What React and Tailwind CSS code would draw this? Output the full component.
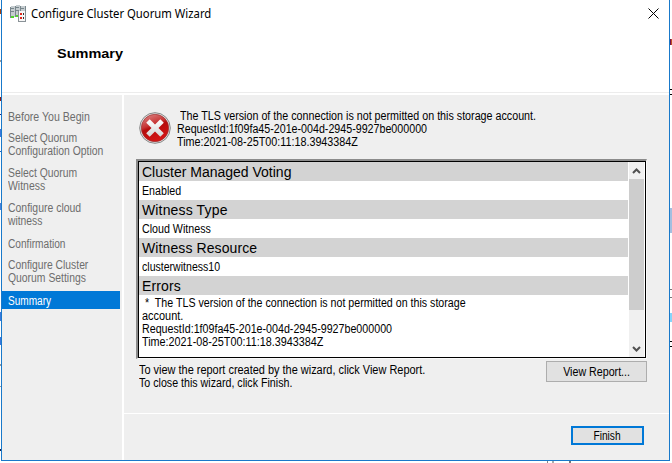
import React from "react";

const steps = [
  { lines: ["Before You Begin"], sx: ["scale-x-[0.882]"] },
  { lines: ["Select Quorum", "Configuration Option"], sx: ["scale-x-[0.863]", "scale-x-[0.866]"] },
  { lines: ["Select Quorum", "Witness"], sx: ["scale-x-[0.863]", "scale-x-[0.87]"] },
  { lines: ["Configure cloud", "witness"], sx: ["scale-x-[0.87]", "scale-x-[0.86]"] },
  { lines: ["Confirmation"], sx: ["scale-x-[0.845]"] },
  { lines: ["Configure Cluster", "Quorum Settings"], sx: ["scale-x-[0.86]", "scale-x-[0.865]"] },
];

function Line({ className = "scale-x-[0.89]", children }) {
  return <div className={"h-[13px] w-max origin-left whitespace-pre leading-[13px] " + className}>{children}</div>;
}

function ClusterIcon() {
  return (
    <svg width="17" height="17" viewBox="0 0 17 17" shapeRendering="crispEdges">
      <path d="M1 1h4v11h-4zM6 0h4v11h-4zM11 1h4v10h-4z" fill="#c5cccf" />
      <path d="M0 2h1v11h-1zM5 1h1v11h-1zM10 1h1v6h-1zM1 3h3v1h-3zM1 6h3v1h-3zM6 2h3v1h-3zM6 5h3v1h-3zM11 3h3v1h-3zM15 1h1v6h-1z" fill="#78868c" />
      <path d="M1 11h3v2h-3zM6 10h2v2h-2z" fill="#51d52c" />
      <path d="M9 6h7v10h-7z" fill="#f7f7f7" />
      <path d="M8 6h1v10h-1zM8 16h8v1h-8zM15 6h1v10h-1z" fill="#8a9297" />
      <path d="M10 8h2v2h-2zM10 12h2v2h-2z" fill="#df271c" />
      <path d="M13 8h1v2h-1zM13 12h1v2h-1z" fill="#333" />
    </svg>
  );
}

function ErrorIcon() {
  return (
    <svg width="32" height="32" viewBox="0 0 32 32">
      <defs>
        <linearGradient id="red" x1="0" y1="0" x2="0.4" y2="1">
          <stop offset="0" stopColor="#e09090" />
          <stop offset="0.45" stopColor="#c73535" />
          <stop offset="0.55" stopColor="#b50d0d" />
          <stop offset="1" stopColor="#d31414" />
        </linearGradient>
        <linearGradient id="cross" x1="0" y1="0" x2="0" y2="1">
          <stop offset="0" stopColor="#ffffff" />
          <stop offset="1" stopColor="#d4d4d4" />
        </linearGradient>
      </defs>
      <circle cx="16" cy="16" r="15.3" fill="#e6e6e6" stroke="#858585" strokeWidth="1" />
      <circle cx="16" cy="16" r="13.7" fill="url(#red)" stroke="#9a3030" strokeWidth="0.7" />
      <path d="M10.700 7.200 16 12.500l5.300-5.300 3.500 3.500L19.500 16l5.300 5.300-3.500 3.500L16 19.500l-5.300 5.300-3.500-3.500L12.500 16l-5.300-5.300z" fill="url(#cross)" />
    </svg>
  );
}

function Heading({ children, className = "" }) {
  return <div className={"h-[19px] w-[489px] whitespace-pre bg-[#d3d3d3] pl-[3px] text-[14px] leading-[20px] " + className}>{children}</div>;
}

function Entry({ children }) {
  return <div className="flex h-[19px] items-end pb-[2px] pl-[3px]">{children}</div>;
}

function LeftEdge() {
  return (
    <div className="flex w-px shrink-0 flex-col pt-[9px]">
      <div className="h-[5px] bg-[#a04010]" />
      <div className="mt-[46px] h-[2px] bg-[#9a9a9a]" />
      <div className="mt-[35px] h-[4px] bg-[#8c1c14]" />
      <div className="mt-[13px] h-px bg-[#202080]" />
      <div className="mt-[14px] h-[8px] bg-[#3a78dc]" />
      <div className="mt-[14px] h-px bg-[#2060c0]" />
      <div className="mt-[51px] h-[7px] bg-[#4a80d8]" />
      <div className="mt-[102px] h-[9px] bg-[#3a78dc]" />
      <div className="mt-[16px] h-[8px] bg-[#3a78dc]" />
      <div className="mt-[19px] h-[2px] bg-[#9a9a9a]" />
      <div className="mt-[20px] h-px bg-[#9a9a9a]" />
      <div className="mt-[62px] h-[2px] bg-[#102050]" />
    </div>
  );
}

function RightEdge() {
  return (
    <div className="flex w-[2px] shrink-0 flex-col pt-[39px]">
      <div className="h-[6px] border-l border-[#701050] bg-[#c05020]" />
      <div className="mt-[44px] h-[6px] border-y border-black" />
      <div className="mt-[113px] h-[25px] bg-[#a3bfe0]" />
      <div className="mt-[56px] h-[9px] border-y border-[#777]" />
      <div className="mt-[15px] h-[9px] bg-[#85d5fb]" />
      <div className="mt-[19px] h-[6px] border-y border-black" />
    </div>
  );
}

export default function App() {
  return (
    <div className="h-[463px] w-[672px] overflow-hidden bg-white font-['Liberation_Sans',Arial,sans-serif] text-[12px] text-black">
      <div className="flex h-[461px]">
        <LeftEdge />
        <div className="flex w-[669px] flex-col border-x border-b border-[#1979ca] bg-white">
          <header className="h-[92px] shrink-0">
            <div className="flex h-[27px] items-center gap-[4px] pr-[10px] pl-[8px]">
              <ClusterIcon />
              <div className="origin-left scale-x-[0.942] font-['Noto_Sans',sans-serif] text-[12px] leading-[16px] whitespace-pre">Configure Cluster Quorum Wizard</div>
              <svg className="ml-auto" width="11" height="11" viewBox="0 0 11 11"><path d="M.5.5l10 10M10.500.5l-10 10" stroke="#000" /></svg>
            </div>
            <div className="flex pt-[19px] pl-[55px]">
              <div className="origin-left scale-x-[1.115] text-[13px] leading-[16px] font-bold">Summary</div>
            </div>
          </header>
          <div className="mb-[2px] h-px shrink-0 bg-[#ececec]" />
          <div className="flex min-h-0 flex-1 gap-[2px]">
            <nav className="w-[120px] shrink-0 bg-[#efefef] pt-[16px] text-[#6d6d6d]">
              <div className="flex flex-col gap-[9px] pl-[6px] *:first:-mb-px *:last:-mt-px">
                {steps.map((s, i) => (
                  <div key={i} className={i === 4 ? "pt-px" : ""}>
                    {s.lines.map((t, j) => <Line key={j} className={s.sx[j]}>{t}</Line>)}
                  </div>
                ))}
              </div>
              <div className="mt-[6px] h-[18px] w-[118px] bg-[#0078d7] pt-[4px] pl-[6px] text-white"><Line className="scale-x-[0.84]">Summary</Line></div>
            </nav>
            <main className="flex min-w-0 flex-1 flex-col bg-[#efefef]">
              <div className="flex h-[64px] shrink-0 gap-[6px] pt-[15px] pl-[15px]">
                <div className="pt-[2px]"><ErrorIcon /></div>
                <div>
                  <div className="pl-[3px]"><Line className="scale-x-[0.893]">The TLS version of the connection is not permitted on this storage account.</Line></div>
                  <Line>RequestId:1f09fa45-201e-004d-2945-9927be000000</Line>
                  <Line className="scale-x-[0.898]">Time:2021-08-25T00:11:18.3943384Z</Line>
                </div>
              </div>
              <div className="ml-[12px] h-[200px] w-[511px] shrink-0 border-t-2 border-r border-b border-l-2 border-t-[#8b8b8b] border-r-[#fafafa] border-b-[#fafafa] border-l-[#8b8b8b]">
                <div className="flex h-full border border-black bg-white">
                  <div className="w-[490px]">
                    <Heading>Cluster Managed Voting</Heading>
                    <Entry><Line>Enabled</Line></Entry>
                    <Heading className="tracking-[0.15px]">Witness Type</Heading>
                    <Entry><Line>Cloud Witness</Line></Entry>
                    <Heading className="tracking-[0.1px]">Witness Resource</Heading>
                    <Entry><Line className="scale-x-[0.88]">clusterwitness10</Line></Entry>
                    <Heading className="tracking-[0.15px]">Errors</Heading>
                    <div className="pt-[2px] pl-[3px]">
                      <Line className="scale-x-[0.888]"> *  The TLS version of the connection is not permitted on this storage</Line>
                      <Line className="scale-x-[0.91]">account.</Line>
                      <Line>RequestId:1f09fa45-201e-004d-2945-9927be000000</Line>
                      <Line className="scale-x-[0.9]">Time:2021-08-25T00:11:18.3943384Z</Line>
                    </div>
                  </div>
                  <div className="flex w-[15px] flex-col bg-[#f0f0f0]">
                    <svg width="15" height="17" viewBox="0 0 15 17"><path d="M4 11l3.500-3.500L11 11" fill="none" stroke="#505050" strokeWidth="2" /></svg>
                    <div className="h-[131px] bg-[#cdcdcd]" />
                    <svg className="mt-auto" width="15" height="17" viewBox="0 0 15 17"><path d="M4 7l3.500 3.500L11 7" fill="none" stroke="#505050" strokeWidth="2" /></svg>
                  </div>
                </div>
              </div>
              <div className="flex h-[54px] shrink-0 items-start justify-between border-b border-[#efefef] pt-[2px] pr-[22px] pl-[15px]">
                <div className="pt-[3px]">
                  <Line className="scale-x-[0.912]">To view the report created by the wizard, click View Report.</Line>
                  <Line className="scale-x-[0.888]">To close this wizard, click Finish.</Line>
                </div>
                <button className="flex h-[21px] w-[101px] items-center justify-center border border-[#adadad] bg-[#e1e1e1]"><span className="scale-x-[0.89]">View Report...</span></button>
              </div>
              <div className="flex flex-1 items-start justify-end border-t border-white pt-[12px] pr-[25px]">
                <button className="flex h-[19px] w-[73px] items-center justify-center border-2 border-[#0078d7] bg-[#e1e1e1]"><span className="scale-x-[0.85]">Finish</span></button>
              </div>
            </main>
          </div>
        </div>
        <RightEdge />
      </div>
      <div className="flex h-[2px] pl-[547px]">
        <div className="w-px bg-[#888]" />
        <div className="ml-[4px] w-[2px] bg-[#aaa]" />
        <div className="ml-[15px] w-[2px] bg-[#777]" />
      </div>
    </div>
  );
}
